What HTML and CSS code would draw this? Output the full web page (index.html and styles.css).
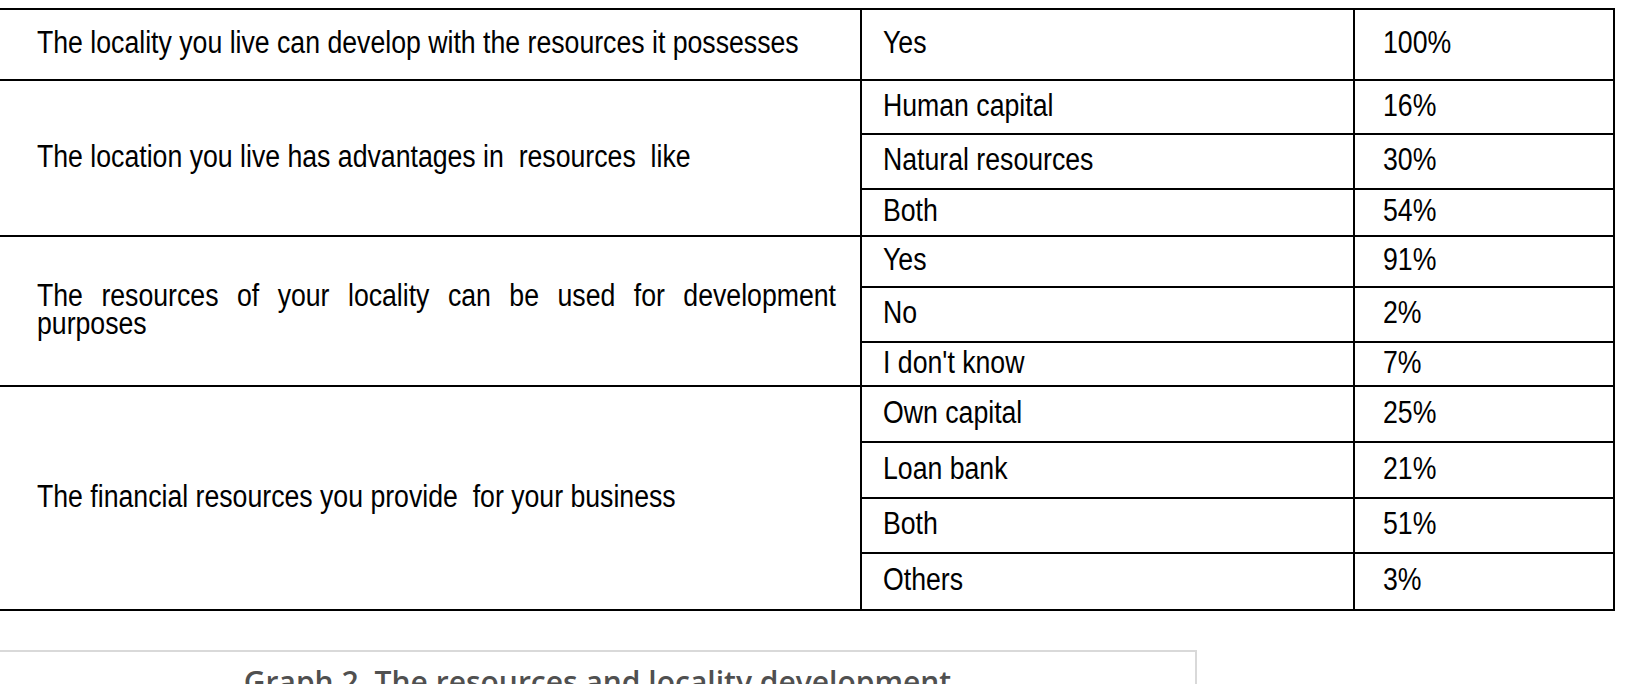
FILE: index.html
```html
<!DOCTYPE html>
<html>
<head>
<meta charset="utf-8">
<link rel="stylesheet" href="styles.css">
</head>
<body>
<table class="survey">
  <colgroup>
    <col class="c-q">
    <col class="c-a">
    <col class="c-p">
  </colgroup>
  <tbody>
    <tr class="h71">
      <td class="q"><div class="t">The locality you live can develop with the resources it possesses</div></td>
      <td><div class="t">Yes</div></td>
      <td class="p"><div class="t">100%</div></td>
    </tr>
    <tr class="h54">
      <td class="q" rowspan="3"><div class="t">The location you live has advantages in&nbsp; resources&nbsp; like</div></td>
      <td><div class="t">Human capital</div></td>
      <td class="p"><div class="t">16%</div></td>
    </tr>
    <tr class="h55">
      <td><div class="t">Natural resources</div></td>
      <td class="p"><div class="t">30%</div></td>
    </tr>
    <tr class="h47">
      <td><div class="t">Both</div></td>
      <td class="p"><div class="t">54%</div></td>
    </tr>
    <tr class="h51">
      <td class="q" rowspan="3"><div class="t just">The resources of your locality can be used for development purposes</div></td>
      <td><div class="t">Yes</div></td>
      <td class="p"><div class="t">91%</div></td>
    </tr>
    <tr class="h55">
      <td><div class="t">No</div></td>
      <td class="p"><div class="t">2%</div></td>
    </tr>
    <tr class="h44">
      <td><div class="t">I don't know</div></td>
      <td class="p"><div class="t">7%</div></td>
    </tr>
    <tr class="h56">
      <td class="q" rowspan="4"><div class="t">The financial resources you provide&nbsp; for your business</div></td>
      <td><div class="t">Own capital</div></td>
      <td class="p"><div class="t">25%</div></td>
    </tr>
    <tr class="h56">
      <td><div class="t">Loan bank</div></td>
      <td class="p"><div class="t">21%</div></td>
    </tr>
    <tr class="h55">
      <td><div class="t">Both</div></td>
      <td class="p"><div class="t">51%</div></td>
    </tr>
    <tr class="h57">
      <td><div class="t">Others</div></td>
      <td class="p"><div class="t">3%</div></td>
    </tr>
  </tbody>
</table>
<div class="graph">
  <div class="graph-title">Graph 2. The resources and locality development</div>
</div>
</body>
</html>
```
FILE: styles.css
```css
html, body {
  margin: 0;
  padding: 0;
  background: #ffffff;
}
body {
  padding-top: 8px;
  overflow: hidden;
  height: 684px;
  box-sizing: border-box;
}
.survey {
  border-collapse: collapse;
  table-layout: fixed;
  width: 1614px;
  font-family: "Liberation Sans", Arial, sans-serif;
  font-size: 31px;
  color: #000;
}
.c-q { width: 861px; }
.c-a { width: 493px; }
.c-p { width: 260px; }
.survey td {
  border: 2px solid #000;
  padding: 0 4px 0 21px;
  vertical-align: middle;
  overflow: visible;
}
.survey td.p {
  padding-left: 28px;
}
.survey td.q {
  border-left: none;
  padding-left: 37px;
  padding-right: 24px;
}
/* Condensed rendering (Arial Narrow look) */
.t {
  width: calc(100% / 0.86);
  transform: scaleX(0.86);
  transform-origin: 0 50%;
  white-space: nowrap;
  line-height: 28px;
  padding-bottom: 3px;
}
.t.just {
  white-space: normal;
  text-align: justify;
}
.h44 { height: 44px; }
.h47 { height: 47px; }
.h51 { height: 51px; }
.h54 { height: 54px; }
.h55 { height: 55px; }
.h56 { height: 56px; }
.h57 { height: 57px; }
.h71 { height: 71px; }
.graph {
  margin-top: 39px;
  width: 1197px;
  height: 60px;
  border: 2px solid #d9d9d9;
  border-left: none;
  box-sizing: border-box;
}
.graph-title {
  padding-top: 9px;
  text-align: center;
  font-family: "Open Sans", sans-serif;
  font-weight: 600;
  font-size: 30px;
  color: #505050;
}
```
